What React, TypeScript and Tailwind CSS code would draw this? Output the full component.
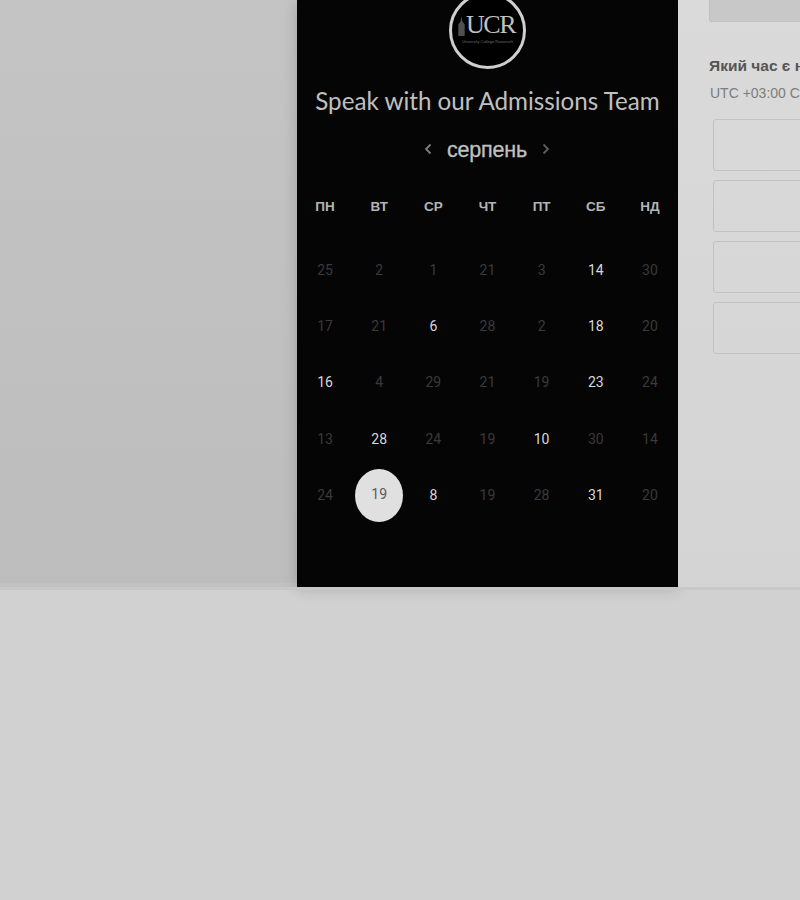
const weekDays = ["ПН", "ВТ", "СР", "ЧТ", "ПТ", "СБ", "НД"];

// [day, available]
const days: [number, boolean][] = [
  [25, false], [2, false], [1, false], [21, false], [3, false], [14, true], [30, false],
  [17, false], [21, false], [6, true], [28, false], [2, false], [18, true], [20, false],
  [16, true], [4, false], [29, false], [21, false], [19, false], [23, true], [24, false],
  [13, false], [28, true], [24, false], [19, false], [10, true], [30, false], [14, false],
  [24, false], [19, true], [8, true], [19, false], [28, false], [31, true], [20, false],
];

const SELECTED = 29;

const Logo = () => (
  <div className="-mt-[8px] flex h-[77px] w-[77px] shrink-0 flex-col items-center justify-center rounded-full border-[3px] border-[#cfcfcf] bg-black">
    <div className="-ml-[3px] -mt-[4px] flex items-end">
      <svg width="9" height="20" viewBox="0 0 9 22" className="mb-[1px]">
        <path d="M4.5 0 L5.5 6 L8 9 L8 22 L1 22 L1 9 L3.5 6 Z" fill="#505050" />
      </svg>
      <span className="font-['Liberation_Serif',serif] text-[26px] leading-[24px] tracking-[-1.5px] text-[#c0c0c0]">
        UCR
      </span>
    </div>
    <div className="mt-[2px] whitespace-nowrap font-['Liberation_Sans',sans-serif] text-[4px] leading-[5px] text-[#6a6a6a]">
      University College Roosevelt
    </div>
  </div>
);

const Calendar = () => (
  <div className="flex h-[587px] w-[381px] shrink-0 flex-col items-center bg-[#050505] shadow-[0_2px_14px_rgba(0,0,0,0.18)]">
    <Logo />
    <h1 className="mt-[16px] whitespace-nowrap font-['Lato',sans-serif] text-[24.2px] font-normal leading-[32px] text-[#c0c0c0]">
      Speak with our Admissions Team
    </h1>
    <div className="mt-[18px] flex h-[30px] items-center">
      <svg width="8" height="12" viewBox="0 0 8 12" fill="none" stroke="#7c7c7c" strokeWidth="1.8" className="-ml-[1px] -mt-[3px]">
        <path d="M6.5 1.5 L2 6 L6.5 10.5" />
      </svg>
      <span className="mx-[15px] font-['Liberation_Sans',sans-serif] text-[21.5px] leading-[30px] tracking-[-0.2px] text-[#c0c0c0] [-webkit-text-stroke:0.3px_#c0c0c0]">
        серпень
      </span>
      <svg width="8" height="12" viewBox="0 0 8 12" fill="none" stroke="#5e5e5e" strokeWidth="1.8" className="-mt-[3px]">
        <path d="M1.5 1.5 L6 6 L1.5 10.5" />
      </svg>
    </div>
    <div className="ml-[1px] mt-[34px] grid w-[379px] grid-cols-7 self-start">
      {weekDays.map((d) => (
        <div
          key={d}
          className="text-center font-['Liberation_Sans',sans-serif] text-[13.5px] font-bold leading-[16px] text-[#b4b4b4]"
        >
          {d}
        </div>
      ))}
    </div>
    <div className="ml-[1px] mt-[27px] grid w-[379px] grid-cols-7 grid-rows-[repeat(5,56.4px)] self-start">
      {days.map(([day, available], i) => (
        <div key={i} className="flex items-center justify-center">
          {i === SELECTED ? (
            <div className="flex h-[53px] w-[48px] items-center justify-center rounded-[50%] bg-[#e0e0e0] font-['Roboto',sans-serif] text-[14px] text-[#5a5a5a]">
              <span className="-mt-[3px]">{day}</span>
            </div>
          ) : (
            <span
              className={
                available
                  ? "font-['Roboto',sans-serif] text-[14px] text-[#d8d8d8]"
                  : "font-['Roboto',sans-serif] text-[14px] text-[#3a3a3a]"
              }
            >
              {day}
            </span>
          )}
        </div>
      ))}
    </div>
  </div>
);

const TimePanel = () => (
  <div className="h-[587px] min-w-0 flex-1 overflow-hidden bg-gradient-to-b from-[#dadada] to-[#d4d4d4]">
    <div className="ml-[31px] h-[22px] w-[200px] rounded-b-[3px] border border-t-0 border-[#c0c0c0] bg-[#c8c8c8]" />
    <div className="ml-[31px] mt-[34px] whitespace-nowrap font-['Liberation_Sans',sans-serif] text-[15.5px] font-bold leading-[20px] text-[#555555]">
      Який час є найкращим?
    </div>
    <div className="ml-[32px] mt-[7px] whitespace-nowrap font-['Liberation_Sans',sans-serif] text-[14px] leading-[20px] text-[#7d7d7d]">
      UTC +03:00 Східна Європа
    </div>
    <div className="ml-[35px] mt-[16px] flex w-[200px] flex-col gap-[9px]">
      {[0, 1, 2, 3].map((i) => (
        <div key={i} className="h-[52px] rounded-[3px] border border-[#c2c2c2]" />
      ))}
    </div>
  </div>
);

export default function App() {
  return (
    <div className="flex h-[900px] w-[800px] flex-col overflow-hidden bg-[#d1d1d1]">
      <div className="flex h-[587px] shrink-0">
        <div className="h-[587px] w-[297px] shrink-0 border-b-4 border-[#c2c2c2] bg-gradient-to-b from-[#c4c4c4] to-[#bdbdbd]" />
        <Calendar />
        <TimePanel />
      </div>
      <div className="h-[3px] shrink-0 bg-[#c8c8c8]" />
    </div>
  );
}
